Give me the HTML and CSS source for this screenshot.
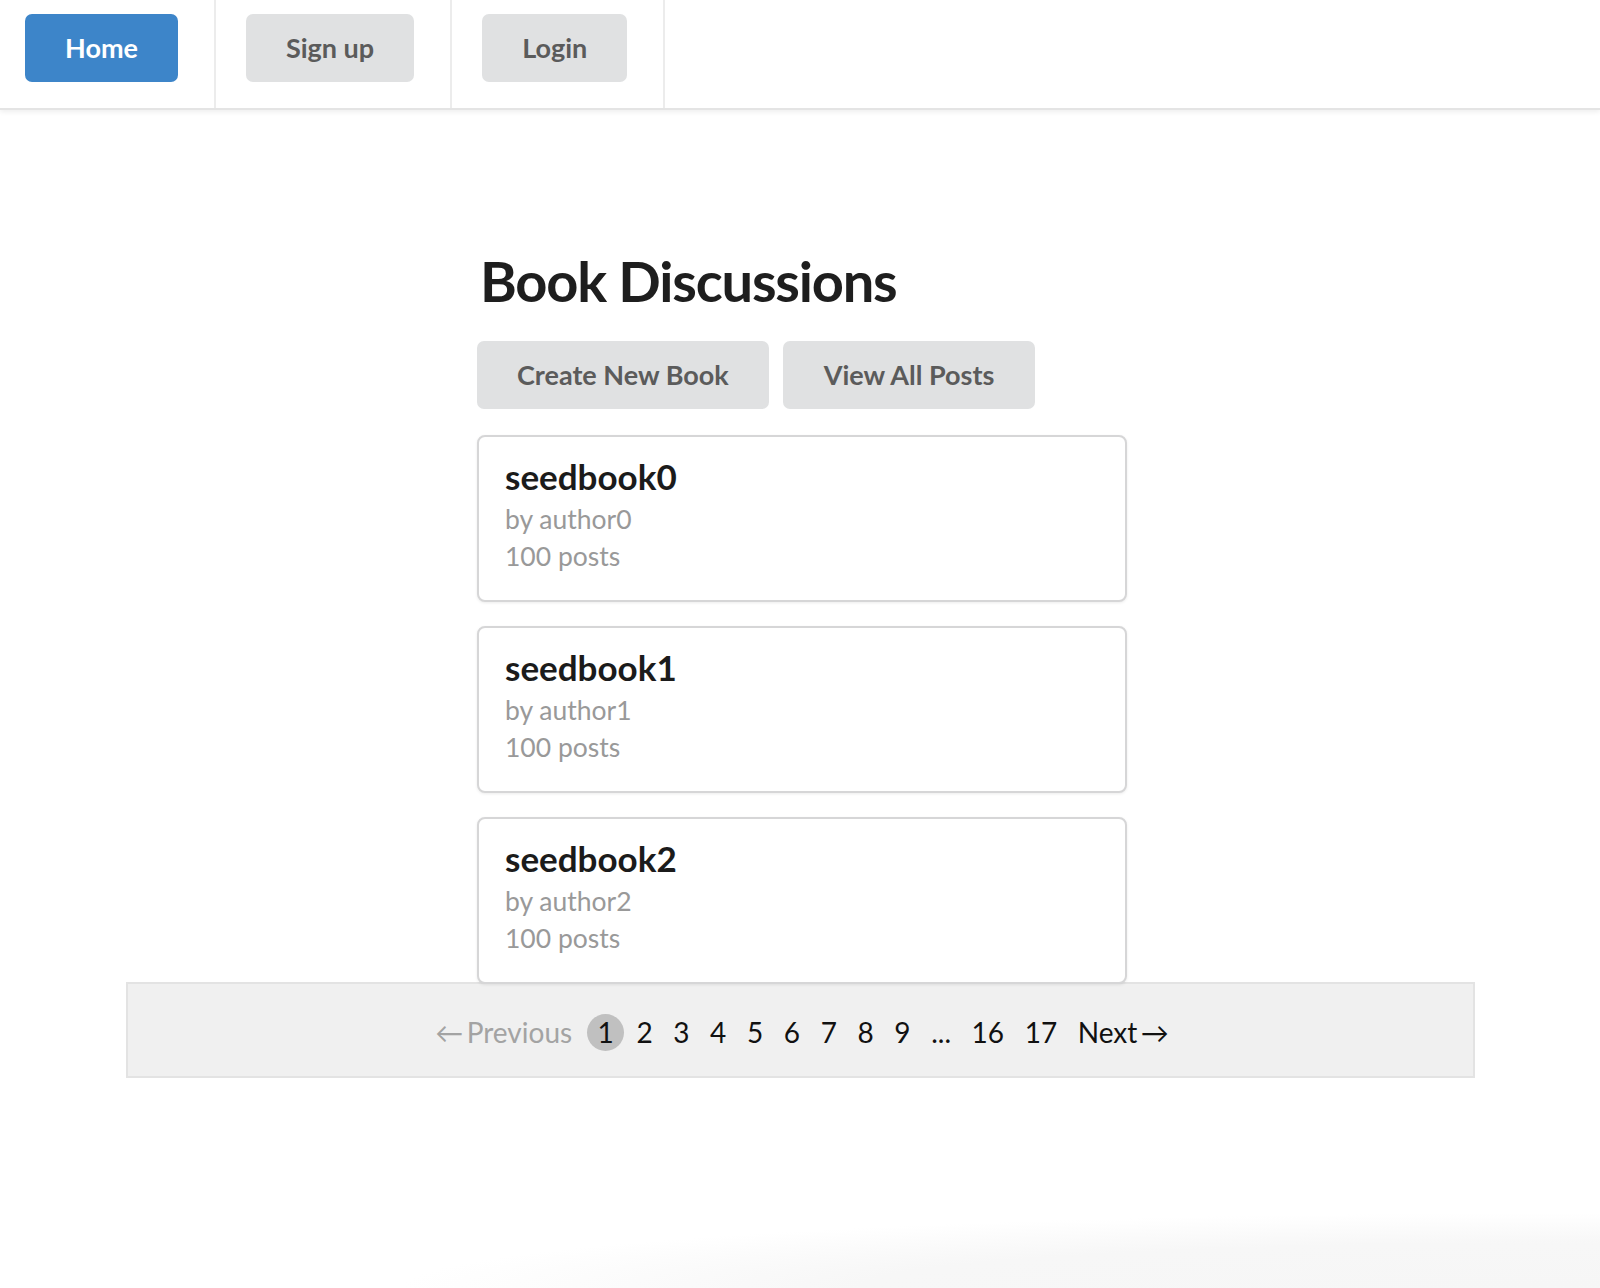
FILE: index.html
```html
<!DOCTYPE html>
<html lang="en">
<head>
<meta charset="utf-8">
<title>Book Discussions</title>
<link rel="stylesheet" href="styles.css">
</head>
<body>
<nav class="topnav">
  <div class="nav-item first"><a class="btn btn-primary">Home</a></div>
  <div class="nav-item"><a class="btn">Sign up</a></div>
  <div class="nav-item"><a class="btn">Login</a></div>
</nav>

<main class="container">
  <h1 class="page-title">Book Discussions</h1>
  <div class="actions">
    <a class="btn">Create New Book</a>
    <a class="btn">View All Posts</a>
  </div>
  <div class="cards">
    <div class="card">
      <div class="card-title">seedbook0</div>
      <div class="card-meta">by author0</div>
      <div class="card-meta">100 posts</div>
    </div>
    <div class="card">
      <div class="card-title">seedbook1</div>
      <div class="card-meta">by author1</div>
      <div class="card-meta">100 posts</div>
    </div>
    <div class="card">
      <div class="card-title">seedbook2</div>
      <div class="card-meta">by author2</div>
      <div class="card-meta">100 posts</div>
    </div>
  </div>
</main>

<div class="pagination">
  <ul class="pages">
    <li class="page prev disabled">&larr;&#8201;Previous</li>
    <li class="page active">1</li>
    <li class="page">2</li>
    <li class="page">3</li>
    <li class="page">4</li>
    <li class="page">5</li>
    <li class="page">6</li>
    <li class="page">7</li>
    <li class="page">8</li>
    <li class="page">9</li>
    <li class="page">...</li>
    <li class="page">16</li>
    <li class="page">17</li>
    <li class="page next">Next&#8201;&rarr;</li>
  </ul>
</div>
</body>
</html>
```

FILE: styles.css
```css
html {
  min-height: 100%;
  background:
    radial-gradient(ellipse 1150px 75px at 1550px 100%, #f6f6f6 0%, #f7f7f7 60%, #fbfbfb 80%, rgba(255,255,255,0) 100%) no-repeat,
    #ffffff;
}

body {
  margin: 0;
  font-family: Lato, "Open Sans", "Liberation Sans", sans-serif;
  color: #1b1c1d;
}

/* ---------- top nav ---------- */
.topnav {
  display: flex;
  height: 108px;
  background: #fff;
  border-bottom: 2px solid #e4e4e4;
  box-shadow: 0 2px 5px rgba(0, 0, 0, 0.07);
}

.nav-item {
  display: flex;
  align-items: flex-start;
  padding: 14px 36px 0 30px;
  border-right: 2px solid #ececec;
}

.nav-item.first {
  padding-left: 25px;
}

.btn {
  display: inline-block;
  padding: 18px 40px;
  font-size: 27px;
  font-weight: 700;
  line-height: 32px;
  color: #5b5b5b;
  background: #e0e1e2;
  border-radius: 7px;
  white-space: nowrap;
  cursor: pointer;
}

.btn-primary {
  color: #ffffff;
  background: #3d85c9;
}

/* ---------- main ---------- */
.container {
  width: 650px;
  margin: 0 auto;
  padding: 136px 0 0 4px;
}

.page-title {
  margin: 0;
  font-size: 56px;
  font-weight: 700;
  line-height: 70px;
  color: #1e1e1e;
  padding-left: 3px;
  letter-spacing: -1.2px;
}

.actions {
  display: flex;
  gap: 14px;
  margin-top: 25px;
}

.actions .btn:last-child {
  padding: 18px 41px;
}

.cards {
  display: flex;
  flex-direction: column;
  gap: 24px;
  margin-top: 26px;
}

.card {
  border: 2px solid #d6d6d7;
  border-radius: 8px;
  box-shadow: 0 1px 3px rgba(0, 0, 0, 0.08);
  padding: 18px 26px 25.5px 26px;
  background: #fff;
}

.card-title {
  font-size: 35px;
  font-weight: 700;
  line-height: 42px;
  color: #1b1b1b;
}

.card-title + .card-meta {
  margin-top: 4px;
}

.card-meta {
  font-size: 26.5px;
  line-height: 36.7px;
  color: #999999;
}

/* ---------- pagination ---------- */
.pagination {
  width: 1345px;
  margin: -2px auto 0;
  background: #f0f0f0;
  border: 2px solid #e3e3e3;
  height: 92px;
  display: flex;
  align-items: center;
  justify-content: center;
}

.pages {
  display: flex;
  align-items: center;
  list-style: none;
  margin: 6px 0 0 4px;
  padding: 0;
  font-size: 28px;
  line-height: 37px;
  color: #111;
}

.page {
  padding: 0 10.3px;
}

.page.disabled {
  color: #a3a3a3;
}

.page.prev {
  padding-right: 15px;
}

.page.active {
  width: 37px;
  height: 37px;
  padding: 0;
  box-sizing: border-box;
  text-align: center;
  border-radius: 50%;
  background: #c0c0c0;
  margin-right: 2px;
}
```
